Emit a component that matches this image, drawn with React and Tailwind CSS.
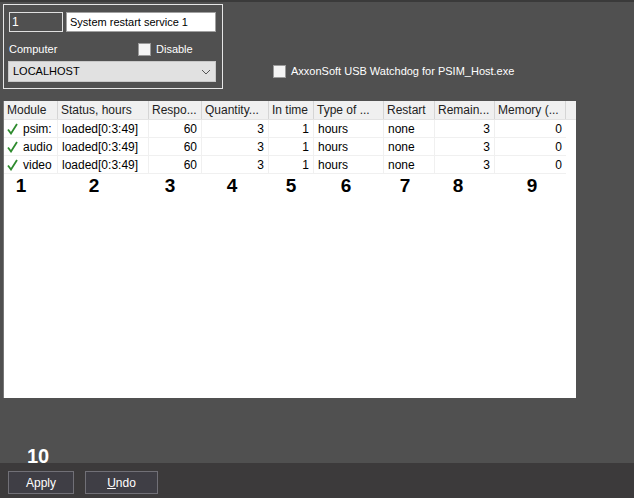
import React from "react";

const cols = [
  { name: "Module", w: 54 },
  { name: "Status, hours", w: 91 },
  { name: "Respo...", w: 53 },
  { name: "Quantity...", w: 67 },
  { name: "In time", w: 45 },
  { name: "Type of ...", w: 70 },
  { name: "Restart", w: 51 },
  { name: "Remain...", w: 60 },
  { name: "Memory (...", w: 71 },
];

const rows = ["psim:", "audio", "video"];

function Check() {
  return (
    <svg width="11" height="12" viewBox="0 0 11 12" className="shrink-0">
      <path d="M1 6.5 L4 10.5 L10 1" fill="none" stroke="#2e8b2e" strokeWidth="1.8" />
    </svg>
  );
}

function Cell({ w, right, children, last }) {
  return (
    <div
      className={`h-[18px] flex items-center border-b border-[#f0f0f0] overflow-hidden whitespace-nowrap ${right ? "justify-end pr-[4px]" : "pl-[4px]"} ${last ? "" : "border-r border-r-[#f0f0f0]"}`}
      style={{ width: w }}
    >
      {children}
    </div>
  );
}

export default function App() {
  const font = { fontFamily: '"Liberation Sans", Arial, sans-serif' };
  return (
    <div className="w-[634px] h-[498px] flex flex-col bg-[#505050] text-[12px]" style={font}>
      <div className="h-[2px] bg-[#3a3a3a]" />
      <div className="flex pl-[3px] pt-[2px] text-[11px]">
        <div className="w-[220px] h-[85px] border border-[#e6e6e6] pl-[5px] pt-[7px] pr-[6px]">
          <div className="flex gap-[3px]">
            <div className="w-[54px] h-[20px] border border-[#e0e0e0] text-white flex items-center pl-[2px] text-[12px]">1</div>
            <div className="w-[150px] h-[20px] bg-white border border-[#a0a0a0] text-black flex items-center pl-[3px]">System restart service 1</div>
          </div>
          <div className="flex items-center mt-[10px] h-[14px]">
            <span className="text-white w-[129px]">Computer</span>
            <span className="w-[13px] h-[13px] bg-[#f4f4f4] border border-[#9a9a9a]" />
            <span className="text-white ml-[5px]">Disable</span>
          </div>
          <div className="mt-[5px] w-[208px] -ml-[1px] h-[21px] bg-[#e1e1e1] border border-[#c8c8c8] flex items-center justify-between px-[4px] text-black">
            <span>LOCALHOST</span>
            <svg width="10" height="6" viewBox="0 0 10 6">
              <path d="M1 1 L5 5 L9 1" fill="none" stroke="#555" strokeWidth="1" />
            </svg>
          </div>
        </div>
        <div className="flex items-center ml-[50px] mt-[61px] h-[13px]">
          <span className="w-[13px] h-[13px] bg-[#f4f4f4] border border-[#9a9a9a]" />
          <span className="text-white ml-[5px]">AxxonSoft USB Watchdog for PSIM_Host.exe</span>
        </div>
      </div>

      <div className="ml-[3px] mt-[12px] w-[573px] h-[297px] border-l border-[#777] bg-white flex flex-col text-black">
        <div className="flex h-[19px] bg-[#f0f0f0] border-b border-[#e3e3e3]">
          {cols.map((c) => (
            <div
              key={c.name}
              className="h-full flex items-center pl-[3px] border-r border-[#d5d5d5] whitespace-nowrap overflow-hidden text-[#222]"
              style={{ width: c.w }}
            >
              {c.name}
            </div>
          ))}
          <div className="flex-1" />
        </div>
        {rows.map((r) => (
          <div key={r} className="flex">
            <Cell w={54}>
              <span className="flex items-center gap-[5px] -ml-[1px]">
                <Check />
                {r}
              </span>
            </Cell>
            <Cell w={91}>loaded[0:3:49]</Cell>
            <Cell w={53} right>60</Cell>
            <Cell w={67} right>3</Cell>
            <Cell w={45} right>1</Cell>
            <Cell w={70}>hours</Cell>
            <Cell w={51}>none</Cell>
            <Cell w={60} right>3</Cell>
            <Cell w={71} right last>0</Cell>
          </div>
        ))}
        <div className="flex h-[22px] items-center text-[19px] font-bold text-black pl-[7px] mt-[1px]">
          <span className="w-[20px] text-center">1</span>
          <span className="w-[20px] text-center ml-[53px]">2</span>
          <span className="w-[20px] text-center ml-[56px]">3</span>
          <span className="w-[20px] text-center ml-[42px]">4</span>
          <span className="w-[20px] text-center ml-[39px]">5</span>
          <span className="w-[20px] text-center ml-[35px]">6</span>
          <span className="w-[20px] text-center ml-[39px]">7</span>
          <span className="w-[20px] text-center ml-[33px]">8</span>
          <span className="w-[20px] text-center ml-[54px]">9</span>
        </div>
      </div>

      <div className="flex-1 flex items-end pl-[27px]">
        <span className="text-white font-bold text-[20px] leading-[18px] -mb-[2px]">10</span>
      </div>
      <div className="h-[35px] bg-[#3c3a3b] flex items-start pt-[8px] pl-[8px] gap-[11px]">
        <button className="w-[66px] h-[23px] bg-[#3f3e45] border border-[#717077] text-white text-[12px] flex items-center justify-center" style={font}>
          Apply
        </button>
        <button className="w-[73px] h-[23px] bg-[#3f3e45] border border-[#717077] text-white text-[12px] flex items-center justify-center" style={font}>
          <span><span className="underline">U</span>ndo</span>
        </button>
      </div>
    </div>
  );
}
